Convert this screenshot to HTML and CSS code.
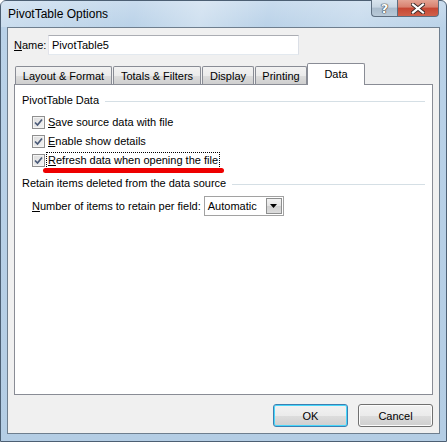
FILE: index.html
```html
<!DOCTYPE html>
<html>
<head>
<meta charset="utf-8">
<link rel="stylesheet" href="styles.css">
</head>
<body>
<div class="window">
  <div class="titlebar">
    <div class="title">PivotTable Options</div>
    <div class="caption-buttons">
      <div class="cap-btn help"><span>?</span></div>
      <div class="cap-btn close">
        <svg width="14" height="11" viewBox="0 0 14 11"><path d="M2 1.5 L12 9.5 M12 1.5 L2 9.5" stroke="#3a2a28" stroke-width="4" stroke-linecap="square"/><path d="M2 1.5 L12 9.5 M12 1.5 L2 9.5" stroke="#ffffff" stroke-width="2.2" stroke-linecap="square"/></svg>
      </div>
    </div>
  </div>
  <div class="client">
    <div class="name-row">
      <label class="name-label"><u>N</u>ame:</label>
      <div class="textbox">PivotTable5</div>
    </div>
    <div class="tabs">
      <div class="tab t1">Layout &amp; Format</div>
      <div class="tab t2">Totals &amp; Filters</div>
      <div class="tab t3">Display</div>
      <div class="tab t4">Printing</div>
      <div class="tab active">Data</div>
    </div>
    <div class="panel">
      <div class="group-title"><span>PivotTable Data</span><div class="rule"></div></div>
      <div class="check-list">
        <div class="check-row"><div class="checkbox"><svg width="9" height="9" viewBox="0 0 9 9"><path d="M1 4.5 L3.5 7 L8 1.5" fill="none" stroke="#4a5a78" stroke-width="1.7"/></svg></div><span><u>S</u>ave source data with file</span></div>
        <div class="check-row"><div class="checkbox"><svg width="9" height="9" viewBox="0 0 9 9"><path d="M1 4.5 L3.5 7 L8 1.5" fill="none" stroke="#4a5a78" stroke-width="1.7"/></svg></div><span><u>E</u>nable show details</span></div>
        <div class="check-row"><div class="checkbox"><svg width="9" height="9" viewBox="0 0 9 9"><path d="M1 4.5 L3.5 7 L8 1.5" fill="none" stroke="#4a5a78" stroke-width="1.7"/></svg></div><span class="focus"><u>R</u>efresh data when opening the file</span></div>
      </div>
      <div class="group-title second"><span>Retain items deleted from the data source</span><div class="rule"></div></div>
      <div class="retain-row">
        <span><u>N</u>umber of items to retain per field:</span>
        <div class="combo"><span class="combo-text">Automatic</span><div class="combo-btn"><svg width="7" height="4" viewBox="0 0 7 4"><path d="M0 0 H7 L3.5 4 Z" fill="#000"/></svg></div></div>
      </div>
      <div class="annotation"></div>
    </div>
    <div class="buttons">
      <div class="btn default">OK</div>
      <div class="btn">Cancel</div>
    </div>
  </div>
</div>
</body>
</html>
```
FILE: styles.css
```css
* { box-sizing: border-box; }
html, body { margin: 0; padding: 0; }
body {
  font-family: "Liberation Sans", Arial, sans-serif;
  font-size: 11px;
  color: #000;
  background: #fff;
}
u { text-decoration: underline; text-underline-offset: 1px; }

.window {
  width: 447px;
  height: 442px;
  border: 1px solid #4c5f73;
  border-radius: 6px 6px 0 0;
  background: linear-gradient(180deg, #c9dcee 0%, #bad2e8 6%, #b4cde4 100%);
  display: flex;
  flex-direction: column;
}

.titlebar {
  height: 26px;
  display: flex;
  justify-content: space-between;
  align-items: flex-start;
  padding: 0 7px 0 7px;
  background: linear-gradient(100deg, rgba(255,255,255,0.25) 0%, rgba(255,255,255,0) 30%, rgba(255,255,255,0.3) 45%, rgba(255,255,255,0) 60%, rgba(255,255,255,0.2) 80%, rgba(255,255,255,0) 100%);
}
.title {
  padding-top: 5px;
  font-size: 12px;
  line-height: 16px;
  color: #000;
}
.caption-buttons {
  display: flex;
  margin-top: -1px;
}
.cap-btn {
  height: 17px;
  border: 1px solid #5d6e80;
  border-top: none;
  display: flex;
  align-items: center;
  justify-content: center;
}
.help {
  width: 26px;
  border-radius: 0 0 0 4px;
  border-right: none;
  background: linear-gradient(180deg, #d9e4ee 0%, #c7d5e2 45%, #a9bbcc 50%, #b8c9d8 100%);
}
.help span {
  font-family: "DejaVu Sans", sans-serif;
  font-weight: bold;
  font-size: 13px;
  line-height: 13px;
  color: #fff;
  text-shadow: 0 0 1px #333, 0 0 1px #333, 0 0 1px #333;
}
.close {
  width: 42px;
  border-radius: 0 0 4px 0;
  background: linear-gradient(180deg, #e4a494 0%, #d8806e 45%, #c64632 50%, #d0604a 100%);
}

.client {
  flex: 1;
  margin: 0 6px 7px 6px;
  border: 1px solid #6e7e8e;
  background: #f0f0f0;
  padding: 7px 6px 0 6px;
  display: flex;
  flex-direction: column;
}

.name-row {
  display: flex;
  align-items: center;
  height: 20px;
  gap: 3px;
}
.name-label {
  width: 31px;
  white-space: nowrap;
}
.textbox {
  width: 251px;
  height: 20px;
  background: #fff;
  border: 1px solid #abadb3;
  border-color: #abadb3 #dbdfe6 #e3e9ef #e2e3ea;
  padding: 1px 3px;
  line-height: 16px;
}

.tabs {
  margin-top: 8px;
  height: 21px;
  display: flex;
  align-items: flex-end;
  gap: 1px;
  padding-left: 1px;
  position: relative;
  z-index: 1;
}
.tab {
  height: 18px;
  border: 1px solid #898c95;
  border-bottom: none;
  border-radius: 2px 2px 0 0;
  background: linear-gradient(180deg, #f2f2f2 0%, #ebebeb 50%, #dddddd 51%, #cfcfcf 100%);
  display: flex;
  align-items: center;
  justify-content: center;
  line-height: 16px;
  padding-top: 1px;
  white-space: nowrap;
}
.t1 { width: 97px; }
.t2 { width: 88px; }
.t3 { width: 52px; }
.t4 { width: 52px; }
.tab.active {
  width: 58px;
  height: 22px;
  margin-left: -1px;
  margin-bottom: -1px;
  background: #fff;
  padding-top: 0;
  padding-bottom: 1px;
}

.panel {
  height: 311px;
  border: 1px solid #898c95;
  background: #fff;
  padding: 8px 7px 0 7px;
  position: relative;
}
.group-title {
  display: flex;
  align-items: center;
  height: 15px;
  line-height: 15px;
}
.group-title .rule {
  flex: 1;
  height: 1px;
  background: #d5dfe5;
  margin-left: 6px;
  margin-top: 1px;
}
.group-title.second {
  margin-top: 9px;
}
.check-list {
  margin-top: 8px;
  padding-left: 10px;
  display: flex;
  flex-direction: column;
  gap: 6px;
}
.check-row {
  display: flex;
  align-items: center;
  height: 13px;
  gap: 3px;
}
.checkbox {
  width: 13px;
  height: 13px;
  border: 1px solid #8f8f8f;
  background: linear-gradient(135deg, #dcdcdc 0%, #f4f4f4 100%);
  box-shadow: inset 0 0 0 1px #f4f4f4;
  display: flex;
  align-items: center;
  justify-content: center;
  flex: none;
}
.check-row span {
  line-height: 15px;
  white-space: nowrap;
}
.focus {
  outline: 1px dotted #000;
  outline-offset: 0;
  padding: 0 1px;
  margin-left: -1px;
}
.retain-row {
  margin-top: 5px;
  padding-left: 10px;
  display: flex;
  align-items: center;
  gap: 3px;
  height: 20px;
  white-space: nowrap;
}
.combo {
  width: 80px;
  height: 20px;
  border: 1px solid #a2a2a2;
  background: #fff;
  display: flex;
  align-items: center;
  justify-content: space-between;
  padding: 1px 1px 1px 3px;
}
.combo-text { line-height: 16px; }
.combo-btn {
  width: 16px;
  height: 16px;
  border: 1px solid #8e8f8f;
  background: linear-gradient(180deg, #f2f2f2 0%, #e4e4e4 50%, #d0d0d0 51%, #dcdcdc 100%);
  display: flex;
  align-items: center;
  justify-content: center;
}
.annotation {
  position: absolute;
  left: 28px;
  top: 83px;
  width: 181px;
  height: 5px;
  border-radius: 3px;
  background: #ee0000;
}

.buttons {
  margin-top: 9px;
  display: flex;
  justify-content: flex-end;
  gap: 10px;
}
.btn {
  width: 75px;
  height: 23px;
  border: 1px solid #707070;
  border-radius: 3px;
  background: linear-gradient(180deg, #f2f2f2 0%, #ebebeb 50%, #dddddd 51%, #cfcfcf 100%);
  box-shadow: inset 0 0 0 1px #fcfcfc;
  display: flex;
  align-items: center;
  justify-content: center;
  line-height: 16px;
}
.btn.default {
  border-color: #3c7fb1;
  box-shadow: inset 0 0 0 1px #48d7fb;
}
```
